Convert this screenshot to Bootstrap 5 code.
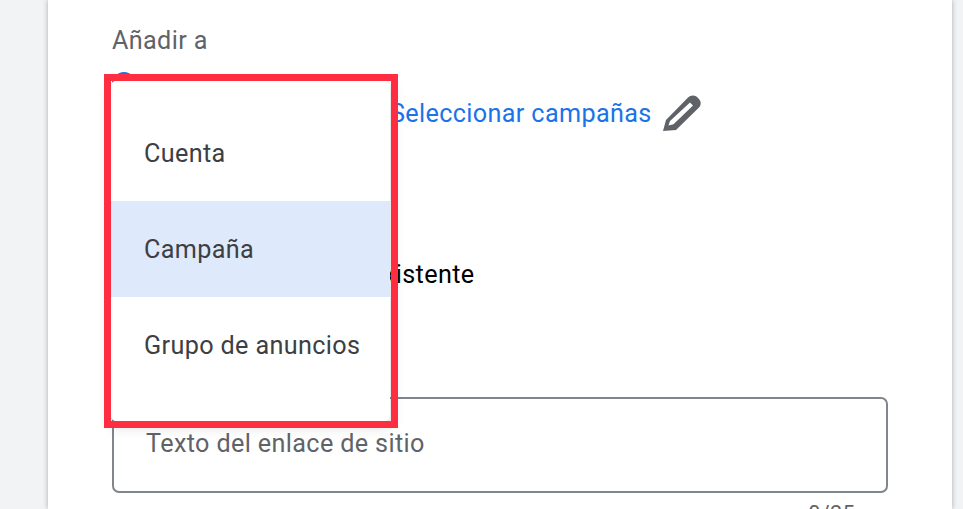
<!DOCTYPE html>
<html lang="es">
<head>
<meta charset="utf-8">
<title>Añadir a</title>
<link href="https://cdn.jsdelivr.net/npm/bootstrap@5.3.0/dist/css/bootstrap.min.css" rel="stylesheet">
<style>
html,body{height:509px;overflow:hidden}
body{background:#f1f3f4;font-family:Roboto,"Liberation Sans",sans-serif;font-size:25.2px;line-height:34px;letter-spacing:.36px}
.sheet{margin:0 11px 0 48px;height:509px;background:#fff;box-shadow:0 0 5px rgba(60,64,67,.4);padding:24px 64px 0;position:relative;overflow:hidden}
.field-title{color:#5f6368;height:32px}
.choice-row{height:57px;margin-top:16px}
.choice-row.second{height:32px;margin-top:130px;color:#000}
.choice-row.second .dot{margin-right:0}
.pick-link{color:#1a73e8;text-decoration:none;margin-left:238px;margin-top:25px}
.pen{width:40px;height:40px;margin-left:10px;margin-top:20px;flex:none}
.dot{width:24px;height:24px;border:2px solid #1a73e8;border-radius:50%;flex:none;margin-right:16px}
.text-box{height:96px;margin-top:106px;border:2px solid #80868b;border-radius:7px;padding:28px 32px;color:#5f6368}
.count{color:#5f6368;text-align:right;font-size:21.6px;padding-right:33px;margin-top:4px}
.pop-menu{position:absolute;left:63px;top:81px;width:279px;height:340px;z-index:5;background:#fff;border-radius:5px;box-shadow:0 4px 14px rgba(60,64,67,.25);padding:24px 0 28px}
.pop-mark{position:absolute;left:56px;top:74px;width:294px;height:354px;border:7px solid #ff2d42;z-index:6}
.pop-item{height:96px;padding:2px 0 0 33px;display:flex;align-items:center;color:#3c4043;white-space:nowrap}
.pop-item.on{background:#dee9fb}
</style>
</head>
<body>
<div class="sheet">
  <div class="field-title">Añadir a</div>
  <div class="choice-row d-flex align-items-start">
    <span class="dot"></span>
    <a class="pick-link" href="#">Seleccionar campañas</a>
    <svg class="pen" viewBox="0 0 40 40" aria-hidden="true"><path fill="#5f6368" fill-rule="evenodd" d="M1 39l3-11L26 5.500c2-2 5.500-3 8.500-1L37 7c2.500 3 2 6.500 0 8.500L14 38zM6.500 33.500l5-1.300L31 13.500 28 10.500 8 29z"/></svg>
  </div>
  <div class="choice-row second d-flex align-items-center"><span class="dot"></span>Usar enlace de sitio existente</div>
  <div class="text-box">Texto del enlace de sitio</div>
  <div class="count">0/25</div>
  <div class="pop-menu">
    <div class="pop-item">Cuenta</div>
    <div class="pop-item on">Campaña</div>
    <div class="pop-item">Grupo de anuncios</div>
  </div>
  <div class="pop-mark"></div>
</div>
<script src="https://cdn.jsdelivr.net/npm/bootstrap@5.3.0/dist/js/bootstrap.bundle.min.js"></script>
</body>
</html>
